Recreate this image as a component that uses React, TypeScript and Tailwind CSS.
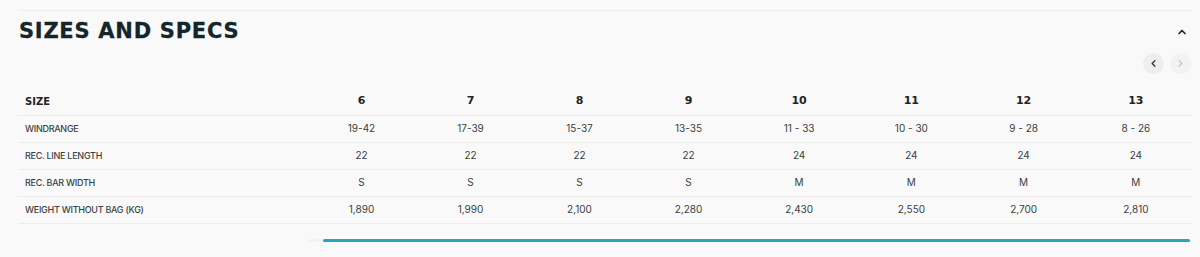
import { ChevronUp, ChevronLeft, ChevronRight } from 'lucide-react';

const sizes = ['6', '7', '8', '9', '10', '11', '12', '13'];

const rows = [
    { label: 'WINDRANGE', values: ['19-42', '17-39', '15-37', '13-35', '11 - 33', '10 - 30', '9 - 28', '8 - 26'] },
    { label: 'REC. LINE LENGTH', values: ['22', '22', '22', '22', '24', '24', '24', '24'] },
    { label: 'REC. BAR WIDTH', values: ['S', 'S', 'S', 'S', 'M', 'M', 'M', 'M'] },
    { label: 'WEIGHT WITHOUT BAG (KG)', values: ['1,890', '1,990', '2,100', '2,280', '2,430', '2,550', '2,700', '2,810'] },
];

export default function App() {
    return (
        <div className="h-[257px] w-[1200px] bg-[#f9f9f9] pl-[18px] pr-[8px] pt-[10px] font-['Inter',sans-serif]">
            <div className="border-t border-[#ececec]">
                {/* Header */}
                <div className="flex h-[42px] items-center justify-between pl-px">
                    <h2 className="font-['DejaVu_Sans',sans-serif] text-[21px] font-bold tracking-[0.035em] text-[#14262b] [-webkit-text-stroke:0.3px_#14262b]">
                        SIZES AND SPECS
                    </h2>
                    <ChevronUp className="mr-[4px] h-[12px] w-[12px] text-[#1f2a2e]" strokeWidth={3.5} />
                </div>

                {/* Carousel nav */}
                <div className="flex justify-end gap-[6px] pr-px">
                    <button className="flex h-[21px] w-[21px] items-center justify-center rounded-full bg-[#eeeeee]">
                        <ChevronLeft className="h-[11px] w-[11px] text-[#333b3e]" strokeWidth={3} />
                    </button>
                    <button className="flex h-[21px] w-[21px] items-center justify-center rounded-full bg-[#f2f2f2]">
                        <ChevronRight className="h-[11px] w-[11px] text-[#c6c6c6]" strokeWidth={3} />
                    </button>
                </div>

                {/* Table */}
                <table className="mt-[14px] w-full table-fixed border-collapse">
                    <colgroup>
                        <col className="w-[289px]" />
                        <col className="w-[109px]" />
                        <col className="w-[109px]" />
                        <col className="w-[109px]" />
                        <col className="w-[109px]" />
                        <col />
                        <col />
                        <col />
                        <col />
                    </colgroup>
                    <thead>
                        <tr className="h-[27px] border-b border-[#ececec]">
                            <th className="pl-[7px] text-left font-['DejaVu_Sans',sans-serif] text-[10px] font-bold text-[#1c2528]">
                                SIZE
                            </th>
                            {sizes.map((s) => (
                                <th key={s} className="text-center font-['DejaVu_Sans',sans-serif] text-[11px] font-bold text-[#1c2528]">
                                    {s}
                                </th>
                            ))}
                        </tr>
                    </thead>
                    <tbody>
                        {rows.map((row) => (
                            <tr key={row.label} className="h-[27px] border-b border-[#ececec]">
                                <td className="pl-[7px] text-left text-[9px] font-medium tracking-[-0.03em] text-[#3a4448]">
                                    {row.label}
                                </td>
                                {row.values.map((v, i) => (
                                    <td key={i} className="text-center text-[10px] text-[#3b3f41]">
                                        {v}
                                    </td>
                                ))}
                            </tr>
                        ))}
                    </tbody>
                </table>

                {/* Scrollbar */}
                <div className="mt-[15px] flex h-[3px] pl-[290px] pr-[2px]">
                    <div className="h-full w-[15px] bg-[#f3f3f3]" />
                    <div className="h-full flex-1 rounded-full bg-[#2aa3bd]" />
                </div>
            </div>
        </div>
    );
}
